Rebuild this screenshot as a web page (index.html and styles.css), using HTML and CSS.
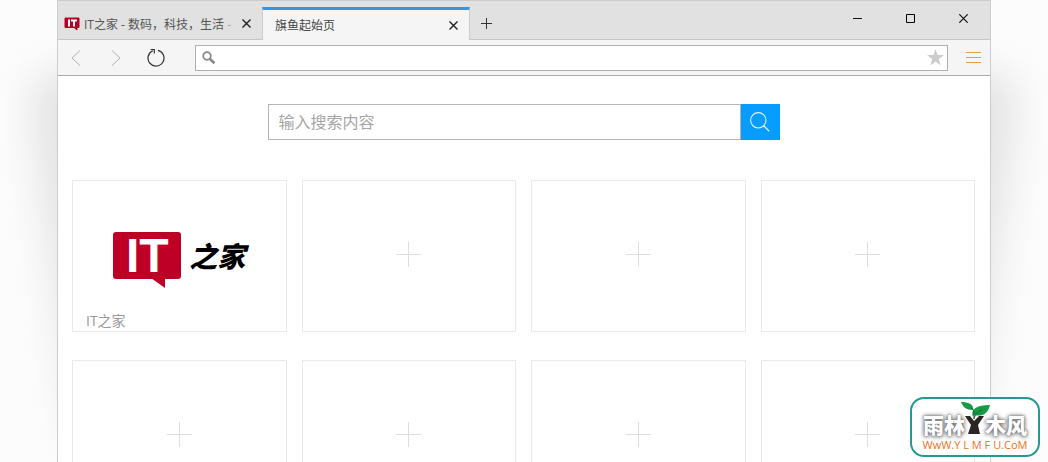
FILE: index.html
```html
<!DOCTYPE html>
<html lang="zh-CN">
<head>
<meta charset="utf-8">
<meta name="viewport" content="width=device-width, initial-scale=1">
<title>旗鱼起始页</title>
<link rel="stylesheet" href="styles.css">
</head>
<body>
<div class="stage">
  <div class="shadow"><div class="shadow-shape"></div></div>
  <div class="window">
    <header class="tabbar">
      <div class="tab">
        <svg class="favicon" width="16" height="14" viewBox="0 0 16 14" aria-hidden="true">
          <path d="M1 1h14v9.500h-2V13l-3-2.500H1z" fill="#b90024" stroke="#b90024" stroke-linejoin="round"/>
          <path d="M4 2.500h2v7H4zM7 2.500h6v2h-2v5H9v-5H7z" fill="#fff"/>
        </svg>
        <span class="tab-title">IT之家 - 数码，科技，生活 <span class="faded">-</span></span>
        <button class="close" aria-label="关闭标签"><svg width="9" height="9" viewBox="0 0 9 9"><path d="M.5.5l8 8M8.500.5l-8 8" stroke="#222" stroke-width="1.400"/></svg></button>
      </div>
      <div class="tab tab-active">
        <span class="tab-title">旗鱼起始页</span>
        <button class="close" aria-label="关闭标签"><svg width="9" height="9" viewBox="0 0 9 9"><path d="M.5.5l8 8M8.500.5l-8 8" stroke="#222" stroke-width="1.400"/></svg></button>
      </div>
      <button class="new-tab" aria-label="新标签"><svg width="11" height="11" viewBox="0 0 11 11"><path d="M0 5.500h11M5.500 0v11" stroke="#333"/></svg></button>
      <div class="controls">
        <button aria-label="最小化"><svg width="9" height="9" viewBox="0 0 9 9"><path d="M0 4.500h9" stroke="#111"/></svg></button>
        <button aria-label="最大化"><svg width="9" height="9" viewBox="0 0 9 9"><path d="M.5.5h8v8h-8z" fill="none" stroke="#000"/></svg></button>
        <button aria-label="关闭"><svg width="9" height="9" viewBox="0 0 9 9"><path d="M.3.3l8.400 8.400M8.700.3L.3 8.700" stroke="#111" stroke-width="1.200"/></svg></button>
      </div>
    </header>
    <nav class="toolbar">
      <div class="nav-buttons">
        <button aria-label="后退"><svg width="10" height="16" viewBox="0 0 10 16"><path d="M9 .5L1 8l8 7.500" fill="none" stroke="#b0b0b0"/></svg></button>
        <button aria-label="前进"><svg width="10" height="16" viewBox="0 0 10 16"><path d="M1 .5L9 8l-8 7.500" fill="none" stroke="#b0b0b0"/></svg></button>
        <button aria-label="刷新"><svg width="18" height="18" viewBox="0 0 18 18"><path d="M11 1.300A8 8 0 1 1 5.800 1.700M3.500.5h3.800v4" fill="none" stroke="#333" stroke-width="1.200"/></svg></button>
      </div>
      <div class="address">
        <svg width="14" height="14" viewBox="0 0 14 14" aria-hidden="true"><circle cx="5" cy="5" r="3.800" fill="none" stroke="#888" stroke-width="1.700"/><path d="M7.800 7.800l4.700 4.500" stroke="#888" stroke-width="2.600"/></svg>
        <input type="text" aria-label="地址栏">
        <button class="star" aria-label="收藏"><svg width="17" height="17" viewBox="0 0 17 17"><path d="M8.500 0l2.100 6H17l-5.200 4 1.900 6.500-5.200-3.900-5.200 3.900L5.200 10 0 6h6.400z" fill="#ccc"/></svg></button>
      </div>
      <button class="menu" aria-label="菜单"><svg width="15" height="11" viewBox="0 0 15 11"><path d="M0 .5h15M0 5.500h15M0 10.500h15" stroke="#e0a04c"/></svg></button>
    </nav>
    <main class="start">
      <form class="search">
        <input type="text" placeholder="输入搜索内容" aria-label="搜索">
        <button type="button" aria-label="搜索"><svg width="20" height="20" viewBox="0 0 20 20"><circle cx="8.300" cy="8.300" r="7.700" fill="none" stroke="#dff3ff" stroke-width="1.100"/><path d="M13.700 13.700l5.500 5.500" stroke="#dff3ff" stroke-width="1.300"/></svg></button>
      </form>
      <div class="tiles">
        <a class="tile site" href="#">
          <span class="logo">
            <span class="logo-badge">IT<svg class="logo-tail" width="14" height="10" viewBox="0 0 14 10"><path d="M0 0h14v10z" fill="#be0027"/></svg></span>
            <span class="logo-script">之家</span>
          </span>
          <span class="site-name">IT之家</span>
        </a>
        <button class="tile add" aria-label="添加"></button>
        <button class="tile add" aria-label="添加"></button>
        <button class="tile add" aria-label="添加"></button>
        <button class="tile add" aria-label="添加"></button>
        <button class="tile add" aria-label="添加"></button>
        <button class="tile add" aria-label="添加"></button>
        <button class="tile add" aria-label="添加"></button>
      </div>
    </main>
  </div>
  <div class="stamp">
    <div class="stamp-name">
      <span>雨林</span>
      <svg width="30" height="34" viewBox="0 0 30 34" aria-hidden="true">
        <path d="M5 15h5l4 5 5-5h5l-6 9 2 9H8l3-9z" fill="#2b2523"/>
        <path d="M13 16C10 8 17 4 30 4c-2 9-8 12-16 10z" fill="#169b45"/>
        <path d="M13 9C6 9 3 6 1 1c7 0 13 2 12 8z" fill="#169b45"/>
        <path d="M11 7c4 2 3 6 3 11 1-5 4-7 8-9" fill="none" stroke="#0a6530"/>
      </svg>
      <span>木风</span>
    </div>
    <div class="stamp-url">WwW.Y L M F U.CoM</div>
  </div>
</div>
</body>
</html>
```

FILE: styles.css
```css
* { box-sizing: border-box; }

body {
  margin: 0;
  background: #fcfcfc;
  font-family: "Open Sans", "Noto Sans CJK SC", sans-serif;
  color: #555;
}

button {
  display: flex;
  align-items: center;
  justify-content: center;
  padding: 0;
  border: 0;
  background: none;
  font: inherit;
}

input {
  flex: 1;
  min-width: 0;
  padding: 0;
  border: 0;
  outline: 0;
  background: none;
  font: inherit;
}

.stage {
  position: relative;
  height: 100vh;
  overflow: hidden;
}

.shadow {
  position: absolute;
  inset: 0;
  filter: blur(18px);
}

.shadow-shape {
  height: 100%;
  background: #e4e4e4;
  clip-path: polygon(50px 70px, calc(100% - 50px) 70px, calc(100% - 30px) 95px, calc(100% - 38px) 170px, calc(100% - 76px) 440px, 76px 440px, 38px 170px, 30px 95px);
}

.window {
  position: relative;
  margin: 0 57px;
  border: 1px solid #ccc;
  border-bottom: 0;
  background: #fff;
}

.tabbar {
  display: flex;
  height: 39px;
  padding-top: 6px;
  background: linear-gradient(#c6c6c6, #c6c6c6) bottom / 100% 1px no-repeat #e1e1e1;
}

.tab {
  display: flex;
  align-items: center;
  width: 204px;
  padding: 0 11px 0 6px;
  font-size: 12px;
}

.tab-active {
  width: 208px;
  padding: 0 12px;
  border: 1px solid #ccc;
  border-top: 3px solid #3a94dc;
  border-bottom: 0;
  background: #f5f5f5;
  color: #444;
}

.favicon { flex: none; margin-right: 4px; }

.tab-title {
  flex: 1;
  white-space: nowrap;
}

.faded { color: #aaa; }

.close { flex: none; width: 9px; }
.tab-active .close { margin-right: -1px; }
.new-tab { width: 33px; }

.controls {
  display: flex;
  align-items: flex-start;
  margin-left: auto;
}

.controls button { width: 53px; height: 22px; }

.toolbar {
  display: flex;
  align-items: center;
  height: 36px;
  border-bottom: 1px solid #aaa;
  background: #f5f5f5;
}

.nav-buttons {
  display: flex;
  flex: none;
  width: 137px;
}

.nav-buttons button { width: 36px; }
.nav-buttons button + button { margin-left: 4px; }

.address {
  display: flex;
  flex: 1;
  align-items: center;
  height: 26px;
  padding: 0 3px 0 6px;
  border: 1px solid #b0b0b0;
  background: #fff;
}

.address input { height: 24px; }

.menu { width: 42px; padding-left: 9px; }
.menu svg { margin-right: 1px; }

.start { padding: 28px 15px 28px 14px; }

.search {
  display: flex;
  width: 512px;
  max-width: 100%;
  height: 36px;
  margin: 0 auto 40px;
}

.search input {
  padding: 0 10px;
  border: 1px solid #b4b4b4;
  font-size: 16px;
}

.search input::placeholder { color: #a5a5a5; opacity: 1; }

.search button {
  width: 39px;
  background: #069dff;
}

.tiles {
  display: grid;
  grid-template-columns: repeat(4, 1fr);
  grid-auto-rows: 152px;
  gap: 28px 15px;
}

.tile { border: 1px solid #e9e9e9; }

.add {
  background:
    linear-gradient(#ddd, #ddd) 50% 49% / 25px 1px no-repeat,
    linear-gradient(#ddd, #ddd) 50% 49% / 1px 25px no-repeat;
}

.site {
  display: flex;
  flex-direction: column;
  justify-content: space-between;
  padding: 51px 13px 0;
  color: #999;
  text-decoration: none;
}

.logo {
  display: flex;
  align-items: center;
  justify-content: center;
  gap: 8px;
}

.logo-badge {
  position: relative;
  width: 68px;
  height: 47px;
  border-radius: 3px;
  background: #be0027;
  color: #fff;
  font: bold 48px/48px "Liberation Sans", sans-serif;
  text-align: center;
}

.logo-tail {
  position: absolute;
  right: 16px;
  top: 46px;
}

.logo-script {
  color: #000;
  font: italic 900 28px/47px "Noto Sans CJK SC", sans-serif;
}

.site-name { font-size: 14px; line-height: 20px; }

.stamp {
  position: absolute;
  right: 8px;
  bottom: 5px;
  width: 130px;
  height: 60px;
  border: 2px solid #259797;
  border-radius: 14px;
  background: #fff;
  text-align: center;
}

.stamp-name {
  display: flex;
  justify-content: center;
  height: 38px;
  padding-top: 2px;
  color: #fff;
  font: 900 21px/46px "Noto Sans CJK SC", sans-serif;
  text-shadow: 0 0 2px #777, 0 0 4px #777, 0 1px 5px #888;
}

.stamp-name svg { flex: none; margin: 0 -5px; }

.stamp-url {
  color: #f07022;
  font: 500 11px/16px "Open Sans", sans-serif;
  white-space: nowrap;
}
```
